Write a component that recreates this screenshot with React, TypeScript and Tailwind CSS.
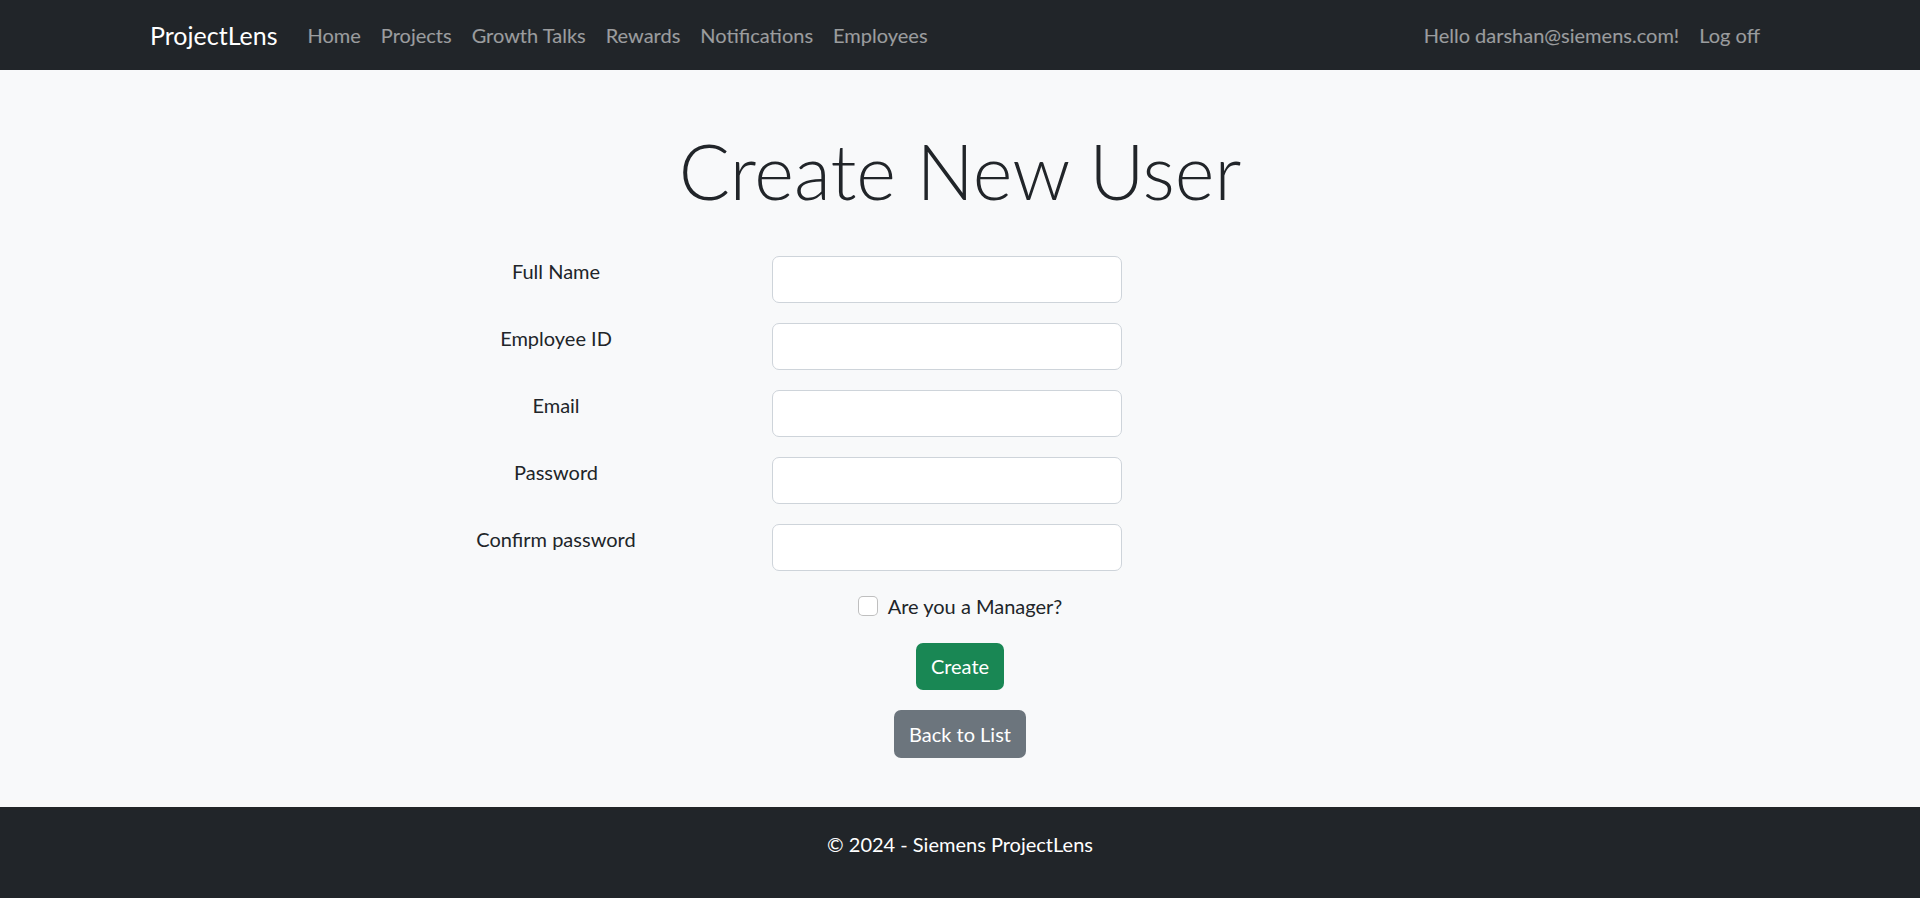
import React from "react";

const navLinks = ["Home", "Projects", "Growth Talks", "Rewards", "Notifications", "Employees"];

const fields = [
  { label: "Full Name", type: "text" },
  { label: "Employee ID", type: "text" },
  { label: "Email", type: "email" },
  { label: "Password", type: "password" },
  { label: "Confirm password", type: "password" },
];

export default function App() {
  return (
    <div className="flex min-h-screen flex-col bg-[#f8f9fa] font-['Lato',sans-serif] text-[20px] leading-[30px] text-[#212529]">
      {/* Navbar */}
      <nav className="h-[70px] shrink-0 bg-[#212529]">
        <div className="mx-auto flex h-full w-[1620px] items-center">
          <a className="mr-[20px] text-[25px] leading-[37px] text-white" href="#">
            ProjectLens
          </a>
          <ul className="flex items-center">
            {navLinks.map((link) => (
              <li key={link}>
                <a className="block px-[10px] py-[10px] text-white/55" href="#">
                  {link}
                </a>
              </li>
            ))}
          </ul>
          <ul className="ml-auto flex items-center">
            <li>
              <a className="block px-[10px] py-[10px] text-white/55" href="#">
                Hello darshan@siemens.com!
              </a>
            </li>
            <li>
              <a className="block px-[10px] py-[10px] text-white/55" href="#">
                Log off
              </a>
            </li>
          </ul>
        </div>
      </nav>

      {/* Main */}
      <main className="flex-1">
        <div className="mx-auto w-[1620px]">
          <h1 className="mt-[55px] mb-[39.5px] text-center text-[76px] leading-[1.2] font-light">
            Create New User
          </h1>

          <form>
            {fields.map((field) => (
              <div key={field.label} className="mb-[20px] flex">
                <label className="ml-[262px] w-[288px] text-center">{field.label}</label>
                <input
                  type={field.type}
                  className="ml-[72px] h-[47px] w-[350px] rounded-[7px] border border-[#ced4da] bg-white px-[15px] outline-none"
                />
              </div>
            ))}

            <div className="mb-[22px] flex items-center justify-center">
              <span className="h-[20px] w-[20px] rounded-[5px] border border-black/25 bg-white" />
              <span className="ml-[10px]">Are you a Manager?</span>
            </div>

            <div className="mb-[20px] flex justify-center">
              <button
                type="button"
                className="h-[47.5px] rounded-[7px] bg-[#198754] px-[15px] text-white"
              >
                Create
              </button>
            </div>

            <div className="flex justify-center">
              <a
                href="#"
                className="flex h-[47.5px] items-center rounded-[7px] bg-[#6c757d] px-[15px] text-white"
              >
                Back to List
              </a>
            </div>
          </form>
        </div>
      </main>

      {/* Footer */}
      <footer className="h-[91px] shrink-0 bg-[#212529] pt-[22px] text-center text-white">
        © 2024 - Siemens ProjectLens
      </footer>
    </div>
  );
}
